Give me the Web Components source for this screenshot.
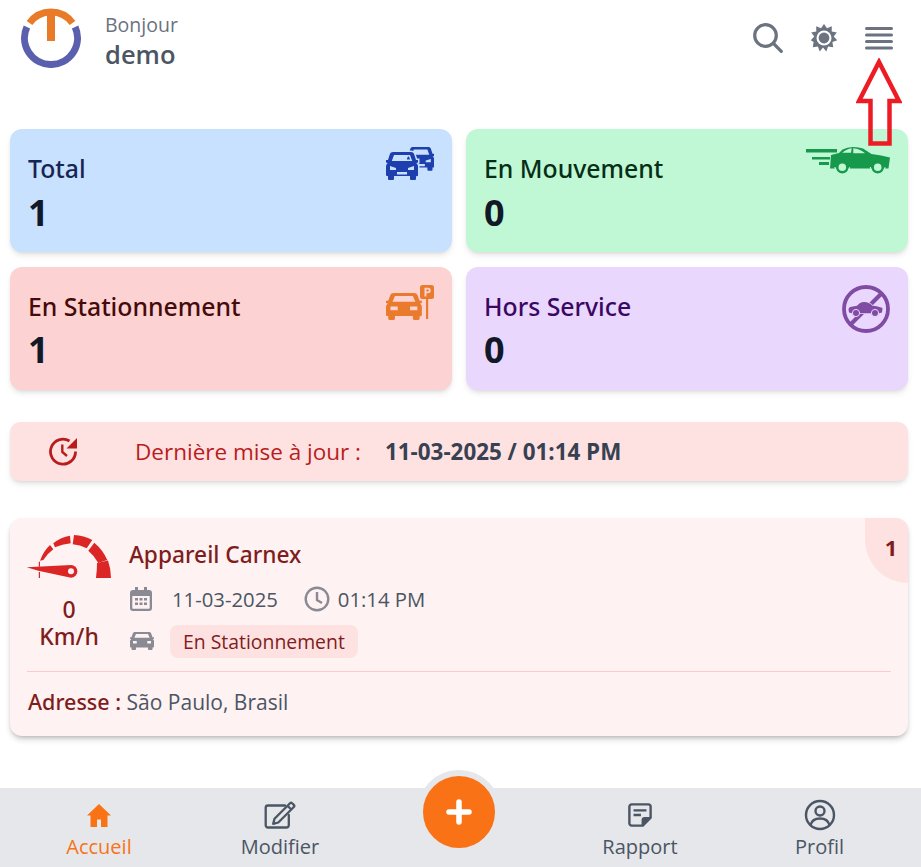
<!DOCTYPE html>
<html lang="fr">
<head>
<meta charset="utf-8">
<title>Accueil</title>
<style>
    html, body { margin: 0; padding: 0; background: #fff; }
    body { font-family: "Open Sans", "Noto Sans", sans-serif; width: 921px; height: 867px; overflow: hidden; }
</style>
</head>
<body>
<app-screen>
    <app-header></app-header>
    <stat-grid>
        <stat-card titre="Total" valeur="1" bg="#c8e1fe" color="#172554">
            <svg width="48" height="33" viewBox="0 0 48 33" fill="#1e40af" fill-rule="evenodd">
                <path transform="translate(21 0) scale(.85)" d="M7 0h18c1.500 0 2.600 .8 3.100 2L30 8h2v2.500l-1.700 .5c.9 1 1.700 2 1.700 3.500v8.500c0 .8-.5 1.200-1.200 1.200H30v2.600c0 .8-.5 1.200-1.200 1.200h-3.600c-.7 0-1.200-.4-1.200-1.200V24H8v2.800c0 .8-.5 1.200-1.200 1.200H3.200C2.500 28 2 27.600 2 26.800V24h-.8C.5 24 0 23.600 0 22.800v-8.300c0-1.500 .8-2.500 1.700-3.500L0 10.500V8h2l1.900-6C4.400 .8 5.500 0 7 0zM8 3 5.800 9h20.400L24 3zM4 14l6 2v2H4zM28 14l-6 2v2h6zM11 20h10v2.500H11z"/>
                <path transform="translate(0 5)" stroke="#c8e1fe" stroke-width="3" paint-order="stroke" d="M7 0h18c1.500 0 2.600 .8 3.100 2L30 8h2v2.500l-1.700 .5c.9 1 1.700 2 1.700 3.500v8.500c0 .8-.5 1.200-1.200 1.200H30v2.600c0 .8-.5 1.200-1.200 1.200h-3.600c-.7 0-1.200-.4-1.200-1.200V24H8v2.800c0 .8-.5 1.200-1.200 1.200H3.200C2.500 28 2 27.600 2 26.800V24h-.8C.5 24 0 23.600 0 22.800v-8.300c0-1.500 .8-2.500 1.700-3.500L0 10.500V8h2l1.900-6C4.400 .8 5.500 0 7 0zM8 3 5.800 9h20.400L24 3zM4 14l6 2v2H4zM28 14l-6 2v2h6zM11 20h10v2.500H11z"/>
            </svg>
        </stat-card>
        <stat-card titre="En Mouvement" valeur="0" bg="#c0f7d4" color="#052e16">
            <svg width="84" height="27" viewBox="0 0 84 27" fill="#16994a">
                <path d="M0 2h31v3.500H0zM6 10h18v2.500H6zM13 15h10v3H13z"/>
                <path fill-rule="evenodd" d="M25 8l8-2 3.500-3.500Q41 0 47 0q6 0 10 1.500L65.500 7q10 1 18.500 3.500L82.500 21.500H24zM36.300 5.800h8.700l.7-4.500q-5 .5-9.400 4.500zM47.300 1.300v5h11.700Q54 2 47.300 1.300z"/>
                <g fill="#c0f7d4" stroke="#16994a" stroke-width="2.400">
                    <circle cx="36.300" cy="20.300" r="5"/>
                    <circle cx="71.700" cy="20.300" r="5"/>
                </g>
                <circle cx="36.300" cy="20.300" r="7.300" fill="none" stroke="#c0f7d4" stroke-width="1.200" stroke-dasharray="23 23"/>
                <circle cx="71.700" cy="20.300" r="7.300" fill="none" stroke="#c0f7d4" stroke-width="1.200" stroke-dasharray="23 23"/>
            </svg>
        </stat-card>
        <stat-card titre="En Stationnement" valeur="1" bg="#fcd2d2" color="#450a0a">
            <svg width="48" height="35" viewBox="0 0 48 35" fill="#ea7a2c" fill-rule="evenodd">
                <path transform="translate(0 8) scale(1.120 .96)" d="M7 0h18c1.500 0 2.600 .8 3.100 2L30 8h2v2.500l-1.700 .5c.9 1 1.700 2 1.700 3.500v8.500c0 .8-.5 1.200-1.200 1.200H30v2.600c0 .8-.5 1.200-1.200 1.200h-3.600c-.7 0-1.200-.4-1.200-1.200V24H8v2.800c0 .8-.5 1.200-1.200 1.200H3.200C2.500 28 2 27.600 2 26.800V24h-.8C.5 24 0 23.600 0 22.800v-8.300c0-1.500 .8-2.500 1.700-3.500L0 10.500V8h2l1.900-6C4.400 .8 5.500 0 7 0zM8 3 5.800 9h20.400L24 3zM4 14h6.500v4H4zM28 14h-6.500v4H28z"/>
                <rect x="40" y="13" width="2.200" height="21"/>
                <rect x="34" y="0" width="14" height="14" rx="2.500"/>
                <path d="M38.500 2.800h3.500a2.700 2.700 0 0 1 0 5.400h-1.600v3.200h-1.900zm1.900 1.700v2h1.500a1 1 0 0 0 0-2z" fill="#fcd2d2"/>
            </svg>
        </stat-card>
        <stat-card titre="Hors Service" valeur="0" bg="#e9d7fe" color="#3b0764">
            <svg width="48" height="48" viewBox="0 0 48 48" fill="none">
                <circle cx="24" cy="24" r="22" stroke="#804ba3" stroke-width="3.800"/>
                <path d="M39.500 8.500 8.500 39.500" stroke="#804ba3" stroke-width="4"/>
                <path d="M6.500 24.500c0-1.500 1-2.500 3-2.800l5.500-1c2-2.300 4-3.700 7-3.700 3.500 0 6 1.200 8.500 3.700 3.500 .3 7 1 10 2.300l-.5 4.500-3 .7H10l-3-.7z" fill="#804ba3" stroke="#e9d7fe" stroke-width="1.500" paint-order="stroke"/>
                <circle cx="14" cy="28" r="3.600" fill="#804ba3" stroke="#e9d7fe"/><circle cx="33" cy="28" r="3.600" fill="#804ba3" stroke="#e9d7fe"/>
            </svg>
        </stat-card>
    </stat-grid>
    <update-banner date="11-03-2025 / 01:14 PM"></update-banner>
    <device-card nom="Appareil Carnex" date="11-03-2025" heure="01:14 PM" etat="En Stationnement" adresse="São Paulo, Brasil" vitesse="0" num="1"></device-card>
    <bottom-nav>
        <nav-item label="Accueil" actif>
            <svg width="26" height="26" viewBox="0 0 26 26" fill="#f97316"><path d="M13 2 1 13.500h3.500V25h6.500v-7.500h4V25h6.500V13.500H25z"/></svg>
        </nav-item>
        <nav-item label="Modifier">
            <svg width="32" height="28" viewBox="0 0 32 28" fill="none" stroke="#4b5563" stroke-width="2.300" stroke-linejoin="round" stroke-linecap="round"><path d="M21 4.500H4a2.300 2.300 0 0 0-2.300 2.300v17.400A2.300 2.300 0 0 0 4 26.500h18.500a2.300 2.300 0 0 0 2.300-2.300V14"/><path d="M26 2.200 10.500 17.700l-1.300 5.100 5.100-1.300L29.800 6a1.500 1.500 0 0 0 0-2.100L28.100 2.200a1.500 1.500 0 0 0-2.100 0zM23.500 4.700l3.800 3.800"/></svg>
        </nav-item>
        <fab-button></fab-button>
        <nav-item label="Rapport">
            <svg width="24" height="24" viewBox="0 0 26 26" fill="none" stroke="#4b5563" stroke-width="2.600" stroke-linejoin="round"><path d="M4 1.500h18a2.500 2.500 0 0 1 2.500 2.500V16L16 24.500H4A2.500 2.500 0 0 1 1.500 22V4A2.500 2.500 0 0 1 4 1.500z"/><path d="M24 16.500h-6a2 2 0 0 0-2 2V24" fill="#4b5563"/><path d="M6 8h14M6 13h8" stroke-linecap="butt"/></svg>
        </nav-item>
        <nav-item label="Profil">
            <svg width="32" height="32" viewBox="0 0 32 32" fill="none" stroke="#4b5563" stroke-width="2.400"><circle cx="16" cy="16" r="14"/><circle cx="16" cy="12" r="4.500"/><path d="M6.500 26c1.200-4.500 4.500-6.500 9.500-6.500s8.300 2 9.500 6.500"/></svg>
        </nav-item>
    </bottom-nav>
    <red-arrow></red-arrow>
</app-screen>

<script>
class AppScreen extends HTMLElement {
    constructor() {
        super();
        this.attachShadow({ mode: 'open' });
        this.shadowRoot.innerHTML = `
            <style>
                :host { display: flex; flex-direction: column; position: relative; width: 921px; height: 867px; overflow: hidden; color: #374151; }
            </style>
            <slot></slot>
        `;
    }
}

class AppHeader extends HTMLElement {
    constructor() {
        super();
        this.attachShadow({ mode: 'open' });
        this.shadowRoot.innerHTML = `
            <style>
                :host { display: flex; align-items: flex-start; justify-content: space-between; height: 129px; padding: 8px 28px 0 21px; box-sizing: border-box; }
                .gauche { display: flex; gap: 24px; }
                .bonjour { font-size: 19.500px; line-height: 24px; margin-top: 5px; color: #6b7280; }
                .nom { font-size: 25.500px; line-height: 34px; font-weight: 600; color: #4b5563; }
                .droite { display: flex; align-items: center; gap: 27px; margin-top: 15px; }
                svg { display: block; }
            </style>
            <div class="gauche">
                <svg width="60" height="60" viewBox="0 0 60 60" fill="none">
                    <path d="M5.900 19A26.500 26.500 0 1 0 54.100 19" stroke="#5a60ad" stroke-width="7"/>
                    <path d="M8.500 15A26.500 26.500 0 0 1 51.500 15" stroke="#e97a28" stroke-width="7"/>
                    <rect x="26" y="3" width="8" height="30" fill="#e97a28"/>
                </svg>
                <div>
                    <div class="bonjour">Bonjour</div>
                    <div class="nom">demo</div>
                </div>
            </div>
            <div class="droite">
                <svg width="30" height="30" viewBox="0 0 30 30" fill="none" stroke="#6b7280" stroke-width="3.200" stroke-linecap="round"><circle cx="12.500" cy="12.500" r="10.800"/><path d="M20.500 20.500 28.300 28.300"/></svg>
                <svg width="28" height="28" viewBox="0 0 28 28" fill="#6b7280">
                    <path d="M14 0l3 4.300 4.800-2-.1 5.100 5.100 1.100-3.100 4.100 3.500 3.700-4.800 1.800.8 5.200-5.100-.8-1.800 4.900-3.300-3.800-3.300 3.800-1.800-4.900-5.100.8 .8-5.200L.8 16.300l3.500-3.700L1.200 8.500l5.100-1.100-.1-5.100 4.800 2z"/>
                    <circle cx="14" cy="14" r="7.500" fill="#fff"/><circle cx="14" cy="14" r="5.400"/>
                </svg>
                <svg width="28" height="24" viewBox="0 0 28 24" fill="#6b7280"><rect y="1" width="28" height="3" rx="1.500"/><rect y="7.500" width="28" height="3" rx="1.500"/><rect y="14" width="28" height="3" rx="1.500"/><rect y="20.500" width="28" height="3" rx="1.500"/></svg>
            </div>
        `;
    }
}

class StatGrid extends HTMLElement {
    constructor() {
        super();
        this.attachShadow({ mode: 'open' });
        this.shadowRoot.innerHTML = `
            <style>
                :host { display: grid; grid-template-columns: 442px 442px; grid-auto-rows: 123px; column-gap: 14px; row-gap: 14.600px; padding-left: 10px; }
            </style>
            <slot></slot>
        `;
    }
}

class StatCard extends HTMLElement {
    constructor() {
        super();
        this.attachShadow({ mode: 'open' });
    }

    connectedCallback() {
        const bg = this.getAttribute('bg');
        const color = this.getAttribute('color');
        this.shadowRoot.innerHTML = `
            <style>
                :host { display: block; position: relative; background: ${bg}; border-radius: 12px; box-shadow: 0 4px 6px -1px rgba(0,0,0,.1), 0 2px 4px -2px rgba(0,0,0,.1); padding: 22px 18px 0; box-sizing: border-box; color: ${color}; }
                .titre { font-family: "Noto Sans", "Open Sans", sans-serif; font-size: 24.800px; line-height: 34px; font-weight: 500; }
                .valeur { font-size: 36px; line-height: 46px; font-weight: 700; color: #111827; margin-top: 4.500px; }
                .icone { position: absolute; right: 18px; top: 18px; }
                ::slotted(svg) { display: block; }
            </style>
            <div class="titre">${this.getAttribute('titre')}</div>
            <div class="valeur">${this.getAttribute('valeur')}</div>
            <div class="icone"><slot></slot></div>
        `;
    }
}

class UpdateBanner extends HTMLElement {
    constructor() {
        super();
        this.attachShadow({ mode: 'open' });
    }

    connectedCallback() {
        this.shadowRoot.innerHTML = `
            <style>
                :host { display: flex; align-items: center; width: 898px; height: 59px; margin: 32.400px 0 0 10px; background: #fee2e2; border-radius: 10px; box-shadow: 0 4px 6px -1px rgba(0,0,0,.1), 0 2px 4px -2px rgba(0,0,0,.1); box-sizing: border-box; padding-left: 39px; font-size: 22.500px; }
                svg { display: block; }
                .lib { color: #b91c1c; margin-left: 57px; }
                .date { font-weight: 700; color: #374151; margin-left: 24px; font-size: 22.400px; }
            </style>
            <svg width="29" height="29" viewBox="0 0 29 29" fill="none">
                <path d="M20.500 4A12.500 12.500 0 1 0 26.500 14.500" stroke="#b91c1c" stroke-width="2.800"/>
                <path d="M28 1v10.500H17.500z" fill="#b91c1c"/>
                <path d="M13.300 7.500V15l4.700 4" stroke="#b91c1c" stroke-width="2.400"/>
            </svg>
            <span class="lib">Dernière mise à jour :</span>
            <span class="date">${this.getAttribute('date')}</span>
        `;
    }
}

class DeviceCard extends HTMLElement {
    constructor() {
        super();
        this.attachShadow({ mode: 'open' });
    }

    connectedCallback() {
        this.shadowRoot.innerHTML = `
            <style>
                :host { display: block; position: relative; overflow: hidden; width: 898px; height: 218px; margin: 37px 0 0 10px; background: #fef2f2; border-radius: 12px; box-shadow: 0 4px 6px -1px rgba(0,0,0,.2), 0 2px 4px -2px rgba(0,0,0,.2); box-sizing: border-box; padding: 17px 17px 0; }
                .haut { display: flex; height: 136px; border-bottom: 1px solid #fecaca; }
                .jauge { font-family: "Noto Sans", "Open Sans", sans-serif; width: 84px; flex: none; text-align: center; color: #7f1d1d; font-size: 23px; font-weight: 500; line-height: 27px; }
                .jauge svg { display: block; margin-bottom: 18px; overflow: visible; }
                .infos { margin-left: 19px; }
                .nom { font-family: "Noto Sans", "Open Sans", sans-serif; font-size: 22.700px; line-height: 30px; font-weight: 500; color: #7f1d1d; margin: 5px 0 0 -1px; }
                .ligne { display: flex; align-items: center; margin-top: 14px; font-size: 20.300px; line-height: 30px; color: #4b5563; }
                .ligne svg { display: block; flex: none; }
                .etat { background: #fee2e2; color: #7f1d1d; font-size: 19.400px; line-height: 33px; padding: 0 13px; border-radius: 8px; margin-left: 16px; }
                .adresse { font-size: 21px; line-height: 30px; margin: 15px 0 0 1px; color: #4b5563; }
                .adresse b { font-family: "Noto Sans", "Open Sans", sans-serif; font-weight: 500; font-size: 21.500px; color: #7f1d1d; }
                .coin { position: absolute; top: 0; right: 0; width: 43px; height: 65px; background: #fee2e2; border-bottom-left-radius: 43px; box-sizing: border-box; padding: 14px 0 0 9px; color: #7f1d1d; font-size: 22px; line-height: 30px; font-weight: 700; text-align: center; }
            </style>
            <div class="haut">
                <div class="jauge">
                    <svg width="84" height="43" viewBox="0 0 84 43" fill="#dc2626">
                        <path d="M70 28 81 25.500Q84 34 84 43H69Q70 35 70 28z"/>
                        <path d="M67.300 7.700Q76 15 80.300 25L71.300 28Q67.500 21 61.300 15.800z"/>
                        <path d="M47 0Q57 .5 65.300 5L59.700 13.300Q53 10 45.700 9.300z"/>
                        <path d="M26.300 8.300Q34 2 43 .7L43.700 8.300Q35 9.500 28 12.300z"/>
                        <path d="M13 25.700Q16.500 16 23 10L26.300 14.300Q20 19 16.300 25z"/>
                        <path d="M-.3 32.300 44 30a6.300 6.300 0 0 1 0 12.700L11.300 35.700z"/>
                        <circle cx="44" cy="36.300" r="3" fill="#fef2f2"/>
                        <rect x="11.800" y="37" width="1.200" height="6"/>
                        <rect x="11.800" y="26.700" width="1.200" height="5"/>
                    </svg>
                    <div>${this.getAttribute('vitesse')}</div>
                    <div>Km/h</div>
                </div>
                <div class="infos">
                    <div class="nom">${this.getAttribute('nom')}</div>
                    <div class="ligne">
                        <svg width="22" height="24" viewBox="0 0 22 24" fill="#8a8a94"><path d="M3 3h2V0h3v3h6V0h3v3h2a3 3 0 0 1 3 3v15a3 3 0 0 1-3 3H3a3 3 0 0 1-3-3V6a3 3 0 0 1 3-3zm-.7 6v12c0 .5 .3 .8 .8 .8h15.800c.5 0 .8-.3 .8-.8V9z" fill-rule="evenodd"/><path d="M5 11h3v2.500H5zM9.500 11h3v2.500h-3zM14 11h3v2.500h-3zM5 15.500h3V18H5zM9.500 15.500h3V18h-3zM14 15.500h3V18h-3z"/></svg>
                        <span style="margin-left:20px">${this.getAttribute('date')}</span>
                        <svg style="margin-left:26px" width="26" height="26" viewBox="0 0 26 26" fill="none" stroke="#8a8a94" stroke-width="2.400"><circle cx="13" cy="13" r="11.300"/><path d="M13 6v8l5 3"/></svg>
                        <span style="margin-left:8px">${this.getAttribute('heure')}</span>
                    </div>
                    <div class="ligne" style="margin-top:11px">
                        <svg width="24" height="18" viewBox="0 0 32 28" preserveAspectRatio="none" fill="#8a8a94" fill-rule="evenodd"><path d="M7 0h18c1.500 0 2.600 .8 3.100 2L30 8h2v2.500l-1.700 .5c.9 1 1.700 2 1.700 3.500v8.500c0 .8-.5 1.200-1.200 1.200H30v2.600c0 .8-.5 1.200-1.200 1.200h-3.600c-.7 0-1.200-.4-1.200-1.200V24H8v2.800c0 .8-.5 1.200-1.200 1.200H3.200C2.500 28 2 27.600 2 26.800V24h-.8C.5 24 0 23.600 0 22.800v-8.300c0-1.500 .8-2.500 1.700-3.500L0 10.500V8h2l1.900-6C4.400 .8 5.500 0 7 0zM8 3 5.800 9h20.400L24 3zM4 14h5v4H4zM28 14h-5v4h5z"/></svg>
                        <span class="etat">${this.getAttribute('etat')}</span>
                    </div>
                </div>
            </div>
            <div class="adresse"><b>Adresse :</b> ${this.getAttribute('adresse')}</div>
            <div class="coin">${this.getAttribute('num')}</div>
        `;
    }
}

class BottomNav extends HTMLElement {
    constructor() {
        super();
        this.attachShadow({ mode: 'open' });
        this.shadowRoot.innerHTML = `
            <style>
                :host { display: grid; grid-template-columns: 198px 164px 194px 168px 191px; position: absolute; left: 0; right: 0; bottom: 0; height: 79px; background: #e5e7eb; }
            </style>
            <slot></slot>
        `;
    }
}

class NavItem extends HTMLElement {
    constructor() {
        super();
        this.attachShadow({ mode: 'open' });
    }

    connectedCallback() {
        const couleur = this.hasAttribute('actif') ? '#f97316' : '#4b5563';
        this.shadowRoot.innerHTML = `
            <style>
                :host { display: flex; flex-direction: column; align-items: center; justify-content: flex-end; padding-bottom: 6px; box-sizing: border-box; height: 79px; color: ${couleur}; font-size: 20px; line-height: 28px; }
                .icone { height: 32px; display: flex; align-items: center; justify-content: center; margin-bottom: 2px; }
                ::slotted(svg) { display: block; }
            </style>
            <div class="icone"><slot></slot></div>
            <div>${this.getAttribute('label')}</div>
        `;
    }
}

class FabButton extends HTMLElement {
    constructor() {
        super();
        this.attachShadow({ mode: 'open' });
        this.shadowRoot.innerHTML = `
            <style>
                :host { display: flex; justify-content: center; position: relative; }
                .rond { position: absolute; top: -18px; width: 72px; height: 72px; border-radius: 50%; background: #f97316; border: 6px solid #e5e7eb; display: flex; align-items: center; justify-content: center; }
                svg { display: block; }
            </style>
            <div class="rond">
                <svg width="26" height="26" viewBox="0 0 26 26" stroke="#fff" stroke-width="5.500" stroke-linecap="round"><path d="M13 3v20M3 13h20"/></svg>
            </div>
        `;
    }
}

class RedArrow extends HTMLElement {
    constructor() {
        super();
        this.attachShadow({ mode: 'open' });
        this.shadowRoot.innerHTML = `
            <style>
                :host { display: block; position: absolute; left: 856px; top: 58px; width: 46px; height: 88px; }
                svg { display: block; }
            </style>
            <svg width="46" height="88" viewBox="0 0 46 88" fill="none" stroke="#ed1c24" stroke-width="4.500" stroke-linejoin="miter">
                <path d="M23 4 43 43H33.500V85.500H14.500V43H3z"/>
            </svg>
        `;
    }
}

customElements.define('app-screen', AppScreen);
customElements.define('app-header', AppHeader);
customElements.define('stat-grid', StatGrid);
customElements.define('stat-card', StatCard);
customElements.define('update-banner', UpdateBanner);
customElements.define('device-card', DeviceCard);
customElements.define('bottom-nav', BottomNav);
customElements.define('nav-item', NavItem);
customElements.define('fab-button', FabButton);
customElements.define('red-arrow', RedArrow);
</script>
</body>
</html>
